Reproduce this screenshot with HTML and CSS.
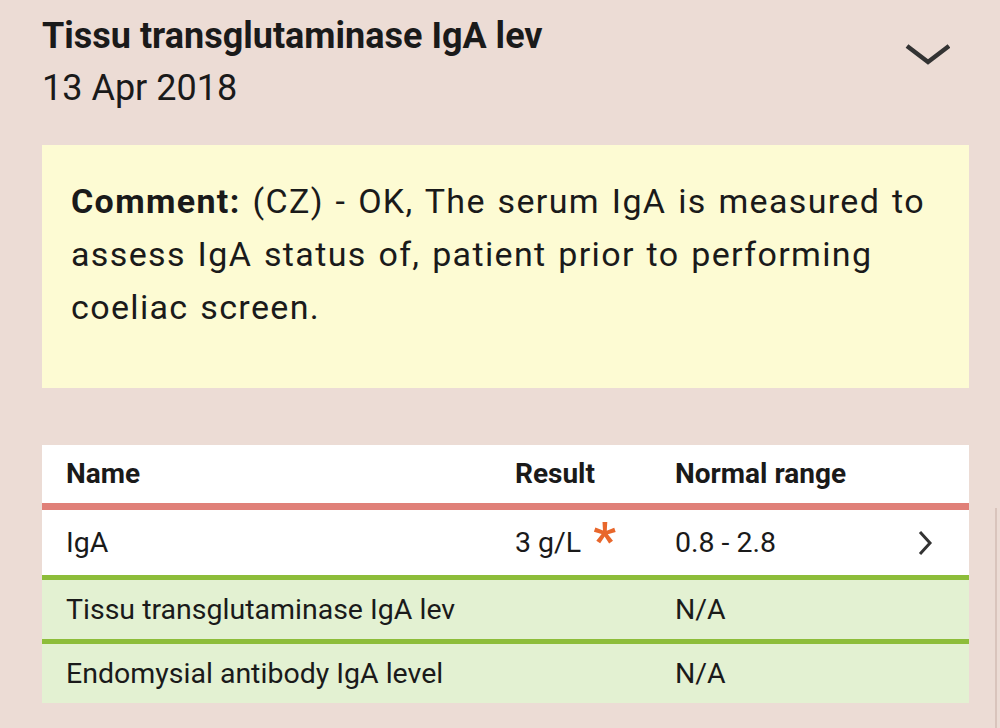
FILE: index.html
```html
<!DOCTYPE html>
<html lang="en">
<head>
  <meta charset="UTF-8" />
  <meta name="viewport" content="width=device-width, initial-scale=1.0" />
  <title>Test result</title>
  <link rel="stylesheet" href="styles.css">
</head>

<body>

  <div class="page">
    <div class="header">
      <div class="header-text">
        <h1>Tissu transglutaminase IgA lev</h1>
        <p class="date">13 Apr 2018</p>
      </div>
      <svg class="chevron-down" width="48" height="26" viewBox="0 0 48 26">
        <path d="M5 4 L26 20 L47 4" fill="none" stroke="#333" stroke-width="4.5" />
      </svg>
    </div>

    <div class="comment">
      <p><b>Comment:</b> (CZ) - OK, The serum IgA is measured to<br>assess IgA status of, patient prior to performing<br>coeliac screen.</p>
    </div>

    <div class="results">
      <div class="row head">
        <span class="col-name">Name</span>
        <span class="col-result">Result</span>
        <span class="col-range">Normal range</span>
      </div>
      <div class="row abnormal">
        <span class="col-name">IgA</span>
        <span class="col-result">3 g/L <span class="flag">*</span></span>
        <span class="col-range">0.8 - 2.8</span>
        <svg class="chevron-right" width="16" height="26" viewBox="0 0 16 26">
          <path d="M3 2 L13 13 L3 24" fill="none" stroke="#333" stroke-width="3" />
        </svg>
      </div>
      <div class="row normal">
        <span class="col-name">Tissu transglutaminase IgA lev</span>
        <span class="col-result"></span>
        <span class="col-range">N/A</span>
      </div>
      <div class="row normal last">
        <span class="col-name">Endomysial antibody IgA level</span>
        <span class="col-result"></span>
        <span class="col-range">N/A</span>
      </div>
    </div>
  </div>

  <div class="edge"></div>

</body>
</html>
```

FILE: styles.css
```css
* {
  margin: 0;
  padding: 0;
  box-sizing: border-box;
}

body {
  min-height: 100vh;
  font-family: 'Roboto', sans-serif;
  background-color: #ecdcd5;
  color: #1a1a1a;
  overflow: hidden;
}

.page {
  padding: 15px 31px 0 42px;
}

.header {
  display: flex;
  justify-content: space-between;
  align-items: flex-start;
}

h1 {
  font-size: 36px;
  font-weight: bold;
  line-height: 42px;
}

.date {
  font-size: 36px;
  line-height: 46px;
  margin-top: 8px;
}

.chevron-down {
  margin: 27px 19px 0 0;
}

.comment {
  margin-top: 34px;
  height: 243px;
  padding: 30px 29px;
  background-color: #fdfbd3;
  font-size: 34px;
  line-height: 53px;
  letter-spacing: 1.35px;
  word-spacing: 2px;
}

.results {
  margin-top: 57px;
  font-size: 28.5px;
}

.head {
  font-size: 28px;
}

.row {
  display: flex;
  align-items: center;
  padding: 0 24px;
}

.col-name {
  width: 449px;
}

.col-result {
  width: 160px;
  position: relative;
}

.col-range {
  flex: 1;
}

.head {
  height: 65px;
  background-color: #fff;
  border-bottom: 7px solid #e08078;
  font-weight: bold;
  padding-bottom: 2px;
}

.abnormal {
  height: 70px;
  background-color: #fff;
  border-bottom: 5px solid #8dbd3a;
}

.normal {
  height: 64px;
  background-color: #e3f1d2;
  border-bottom: 5px solid #8dbd3a;
}

.normal.last {
  height: 59px;
  border-bottom: none;
}

.flag {
  position: absolute;
  top: -14px;
  margin-left: 12px;
  color: #e8672c;
  font-size: 50px;
  font-weight: bold;
}

.chevron-right {
  margin-right: 12px;
}

.edge {
  position: absolute;
  top: 508px;
  right: 3px;
  width: 2px;
  height: 220px;
  background-color: #d9c4bc;
}
```
